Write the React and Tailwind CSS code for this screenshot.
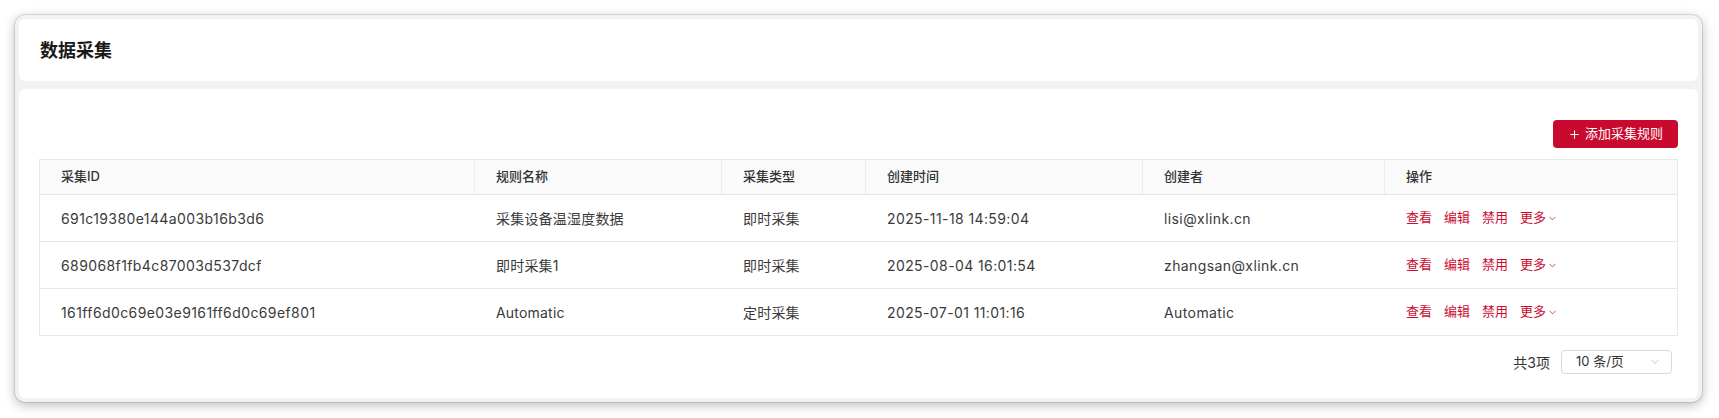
import { ChevronDown, Plus } from "lucide-react";

const rows = [
  {
    id: "691c19380e144a003b16b3d6",
    name: "采集设备温湿度数据",
    type: "即时采集",
    createdAt: "2025-11-18 14:59:04",
    creator: "lisi@xlink.cn",
  },
  {
    id: "689068f1fb4c87003d537dcf",
    name: "即时采集1",
    type: "即时采集",
    createdAt: "2025-08-04 16:01:54",
    creator: "zhangsan@xlink.cn",
  },
  {
    id: "161ff6d0c69e03e9161ff6d0c69ef801",
    name: "Automatic",
    type: "定时采集",
    createdAt: "2025-07-01 11:01:16",
    creator: "Automatic",
  },
];

const cols = "grid grid-cols-[435px_247px_144px_277px_242px_1fr]";

export default function App() {
  return (
    <div
      className="min-h-screen bg-white pt-[15px] pl-[15px] text-[#333]"
      style={{ fontFamily: 'Inter, "Noto Sans CJK SC", sans-serif' }}
    >
      {/* window */}
      <div className="w-[1687px] rounded-[10px] bg-[#f2f2f2] p-[4px] shadow-[0_3px_12px_rgba(0,0,0,0.28)] ring-1 ring-black/10">
        {/* header card */}
        <div className="h-[62px] rounded-[6px] bg-white flex items-center pl-[21px]">
          <h1 className="text-[18px] font-semibold text-[#1a1a1a]">数据采集</h1>
        </div>

        {/* content card */}
        <div className="mt-[8px] rounded-[6px] bg-white px-[20px] pt-[31px] pb-[24px]">
          <div className="flex justify-end">
            <button
              type="button"
              className="h-[28px] w-[125px] rounded-[4px] bg-[#c90a2e] text-white text-[13px] flex items-center justify-center gap-[4px]"
            >
              <Plus size={13} strokeWidth={2} />
              <span>添加采集规则</span>
            </button>
          </div>

          <div className="mt-[11px] border border-[#e8e8e8]">
            <div className={`${cols} h-[35px] bg-[#fafafa] border-b border-[#e3e3e3] text-[13px] font-medium text-[#333]`}>
              {["采集ID", "规则名称", "采集类型", "创建时间", "创建者", "操作"].map((h, i) => (
                <div
                  key={h}
                  className={`flex items-center pl-[21px] ${i < 5 ? "border-r border-[#ececec]" : ""}`}
                >
                  {h}
                </div>
              ))}
            </div>

            {rows.map((r) => (
              <div
                key={r.id}
                className={`${cols} h-[47px] border-b border-[#e8e8e8] last:border-b-0 last:h-[46px] text-[14px] text-[#3a3a3a] tracking-[0.4px]`}
              >
                <div className="flex items-center pl-[21px]">{r.id}</div>
                <div className="flex items-center pl-[21px] tracking-[0.2px]">{r.name}</div>
                <div className="flex items-center pl-[21px] tracking-[0.2px]">{r.type}</div>
                <div className="flex items-center pl-[21px]">{r.createdAt}</div>
                <div className="flex items-center pl-[21px]">{r.creator}</div>
                <div className="flex items-center pl-[21px] gap-[12px] text-[13px] tracking-normal text-[#cb0c2f]">
                  <span>查看</span>
                  <span>编辑</span>
                  <span>禁用</span>
                  <span className="flex items-center">
                    更多
                    <ChevronDown size={11} strokeWidth={1.6} className="ml-[1px]" />
                  </span>
                </div>
              </div>
            ))}
          </div>

          {/* pagination */}
          <div className="mt-[14px] flex items-center justify-end pr-[6px] gap-[11px]">
            <span className="text-[14px] text-[#333]">共3项</span>
            <div className="h-[24px] w-[111px] rounded-[4px] border border-[#d9d9d9] flex items-center justify-between pl-[14px] pr-[10px] text-[13px] text-[#333]">
              <span>10 条/页</span>
              <ChevronDown size={12} strokeWidth={1.5} className="text-[#b0b0b0]" />
            </div>
          </div>
        </div>
      </div>
    </div>
  );
}
